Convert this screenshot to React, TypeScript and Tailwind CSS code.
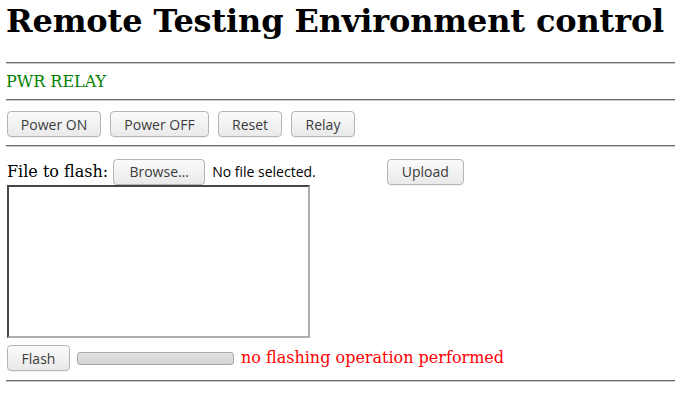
import React from "react";

const btn =
  "inline-flex items-center justify-center h-[26px] rounded-[4px] border border-[#b5b5b5] bg-gradient-to-b from-[#fbfbfb] to-[#e9e9e9] text-[14px] text-[#3c3c3c] font-['Open_Sans',sans-serif] shadow-[0_1px_0_rgba(0,0,0,0.05)]";

function Hr() {
  return <div className="h-[2px] border-t border-t-[#6e6e6e] border-b border-b-[#c8c8c8]" />;
}

export default function App() {
  return (
    <div className="w-[675px] h-[401px] bg-white overflow-hidden pl-[6px] font-['DejaVu_Serif',serif] text-black">
      <h1 className="text-[32px] font-bold leading-[38px] pt-[2px] pb-[22px] whitespace-nowrap tracking-[-0.15px]">
        Remote Testing Environment control
      </h1>
      <Hr />
      <div className="h-[35px] flex items-center text-[16px] text-[#008000]">PWR RELAY</div>
      <Hr />
      <div className="flex gap-[9px] pt-[10px] pb-[8px] pl-[1px]">
        <button className={btn + " w-[94px]"}>Power ON</button>
        <button className={btn + " w-[99px]"}>Power OFF</button>
        <button className={btn + " w-[64px]"}>Reset</button>
        <button className={btn + " w-[64px]"}>Relay</button>
      </div>
      <Hr />
      <div className="flex items-center pt-[11px] h-[38px] pl-[1px]">
        <span className="text-[16px]">File to flash:</span>
        <button className={btn + " w-[92px] h-[25px] ml-[5px]"}>Browse…</button>
        <span className="ml-[7px] text-[14px] font-['Open_Sans',sans-serif]">No file selected.</span>
        <button className={btn + " w-[77px] h-[25px] ml-[71px]"}>Upload</button>
      </div>
      <div className="ml-[1px] w-[303px] h-[153px] border-2 border-t-[#474747] border-l-[#474747] border-b-[#adadad] border-r-[#adadad]" />
      <div className="flex items-center mt-[7px] h-[26px] pl-[1px]">
        <button className={btn + " w-[63px] h-[26px]"}>Flash</button>
        <div className="ml-[7px] w-[157px] h-[13px] rounded-[3px] border border-[#a8a8a8] bg-gradient-to-b from-[#e2e2e2] to-[#d4d4d4]" />
        <span className="ml-[7px] text-[16px] text-[#ff0000]">no flashing operation performed</span>
      </div>
      <div className="mt-[9px]">
        <Hr />
      </div>
    </div>
  );
}
